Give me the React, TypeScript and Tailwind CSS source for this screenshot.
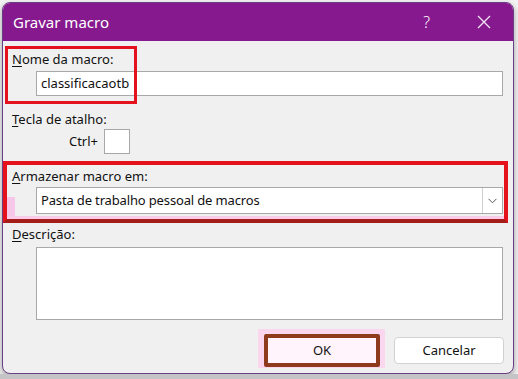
import React from "react";

const font = { fontFamily: '"Segoe UI", "Noto Sans", "Open Sans", sans-serif' };

function Label({ first, rest }: { first: string; rest: string }) {
    return (
        <div className="h-4 leading-4 text-[13px] text-[#111]">
            <span className="underline underline-offset-2">{first}</span>
            {rest}
        </div>
    );
}

export default function App() {
    return (
        <div className="w-[518px] h-[379px] bg-[#f3f3f3] overflow-hidden flex flex-col" style={font}>
            <div className="ml-[2px] mt-[2px] w-[512px] h-[372px] shrink-0 rounded-[8px] border border-[#6a3f86] bg-[#f0f0f0] overflow-hidden flex flex-col shadow-[0_3px_6px_rgba(0,0,0,0.35)]">
                {/* title bar */}
                <div className="h-[38px] shrink-0 bg-[#87198f] flex items-center pl-[10px] text-white">
                    <span className="text-[15px]">Gravar macro</span>
                    <span className="ml-auto text-[16px] font-light mr-[47px]">?</span>
                    <svg width="14" height="14" viewBox="0 0 14 14" className="mr-[22px]">
                        <path d="M1 1L13 13M13 1L1 13" stroke="#f3e6f4" strokeWidth="1.3" />
                    </svg>
                </div>

                {/* body */}
                <div className="relative flex-1 flex flex-col">
                    {/* annotation: nome da macro */}
                    <div className="absolute left-[2px] top-[5px] w-[132px] h-[58px] border-[3px] border-[#e3121c]" />
                    {/* annotation: armazenar macro em */}
                    <div className="absolute left-0 top-[120px] w-[505px] h-[62px] border-[4px] border-[#e5111b] border-b-[#a51d18]">
                        <div className="absolute left-0 bottom-0 w-[8px] h-[22px] bg-[#f7c7ea]" />
                        <div className="absolute left-0 right-0 bottom-0 h-[3px] bg-[#f9cde9]" />
                    </div>

                    <div className="pl-[9px] mt-[10px]">
                        <Label first="N" rest="ome da macro:" />
                    </div>
                    <div className="ml-[33px] mt-[4px] w-[467px] h-[25px] bg-white border border-[#a8a8a8] flex items-center pl-[4px] text-[13px] text-[#111]">
                        classificacaotb
                    </div>

                    <div className="pl-[9px] mt-[15px]">
                        <Label first="T" rest="ecla de atalho:" />
                    </div>
                    <div className="mt-[2px] flex items-center h-[25px]">
                        <span className="w-[95px] text-right text-[13px] text-[#111]">Ctrl+</span>
                        <div className="ml-[6px] w-[26px] h-[25px] bg-white border border-[#a8a8a8]" />
                    </div>

                    <div className="pl-[9px] mt-[14px]">
                        <Label first="A" rest="rmazenar macro em:" />
                    </div>
                    <div className="ml-[33px] mt-[3px] w-[467px] h-[27px] bg-white border border-[#a8a8a8] flex items-center text-[13px] text-[#111]">
                        <span className="pl-[4px] flex-1 tracking-[-0.15px]">Pasta de trabalho pessoal de macros</span>
                        <div className="w-[20px] h-full border-l border-[#d0d0d0] flex items-center justify-center">
                            <svg width="9" height="6" viewBox="0 0 9 6">
                                <path d="M0.5 0.8L4.5 4.8L8.5 0.8" fill="none" stroke="#555" strokeWidth="1" />
                            </svg>
                        </div>
                    </div>

                    <div className="pl-[9px] mt-[12px]">
                        <Label first="D" rest="escrição:" />
                    </div>
                    <div className="ml-[33px] mt-[5px] w-[467px] h-[73px] bg-white border border-[#a8a8a8]" />

                    <div className="mt-[17px] flex justify-end gap-[17px] pr-[9px]">
                        <div className="relative w-[110px] h-[27px]">
                            <div className="absolute -left-[9px] -right-[8px] -top-[8px] -bottom-[4px] bg-[#fbd6ef]" />
                            <div className="absolute inset-0 rounded-[4px] bg-[#fff4fb] flex items-center justify-center text-[13px] text-[#111]">
                                OK
                            </div>
                            <div className="absolute -left-[3px] -right-[3px] -top-[3px] -bottom-[3px] border-[4px] border-[#8e3a1c] rounded-[2px]" />
                        </div>
                        <div className="w-[110px] h-[27px] rounded-[4px] bg-white border border-[#d2d2d2] flex items-center justify-center text-[13px] text-[#111]">
                            Cancelar
                        </div>
                    </div>
                </div>
            </div>
            <div className="flex-1 bg-[#c4c4c6]" />
        </div>
    );
}
